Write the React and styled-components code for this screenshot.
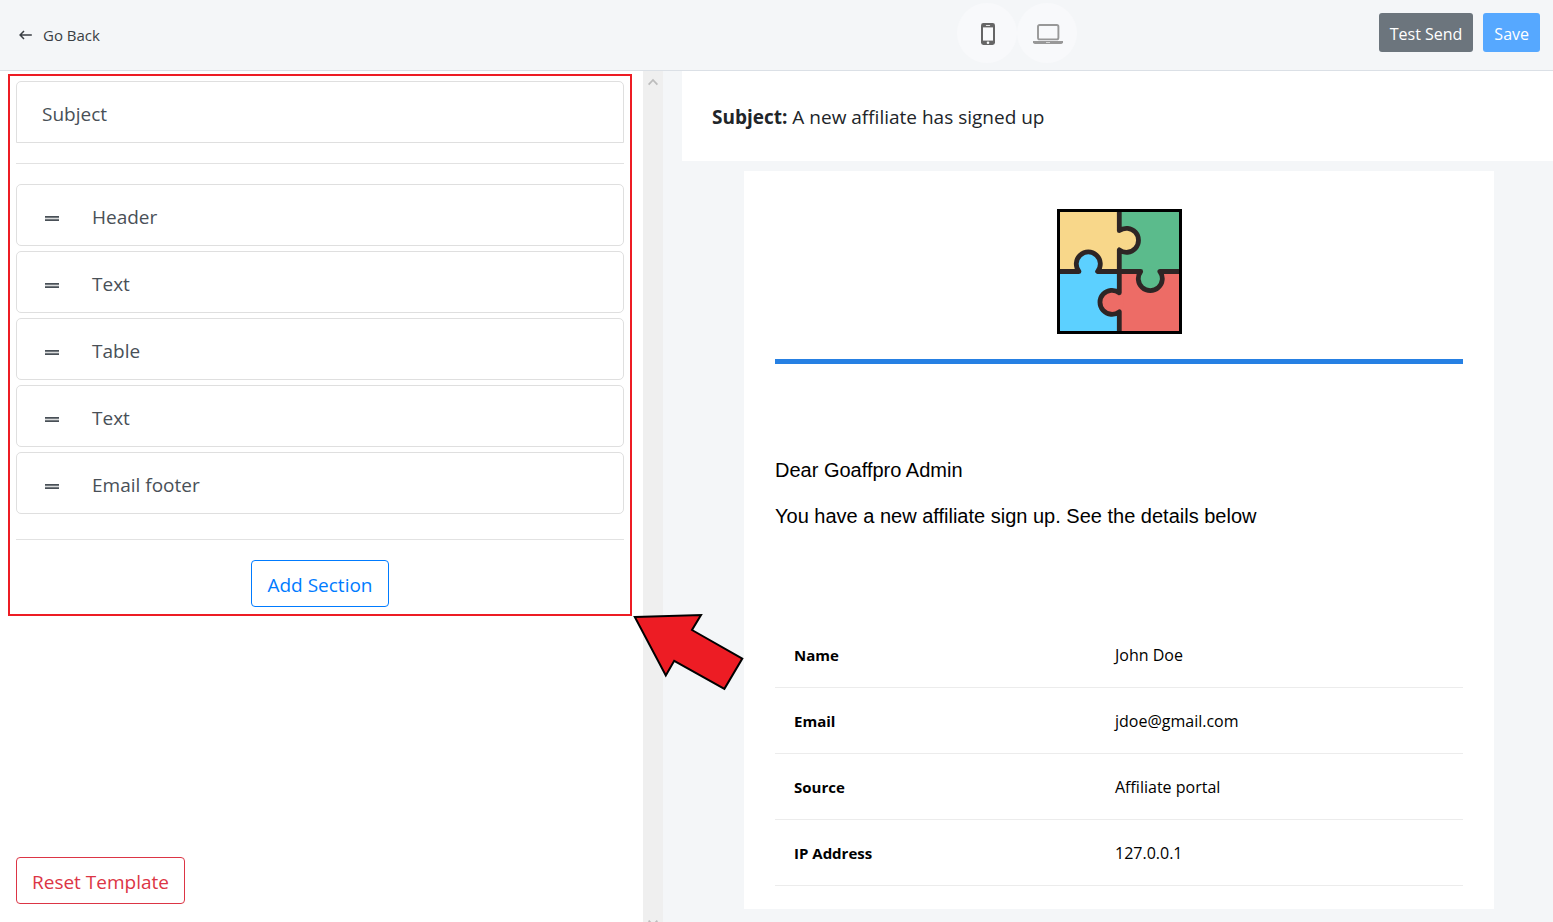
import React from "react";
import styled, { createGlobalStyle } from "styled-components";

const GlobalStyle = createGlobalStyle`
  *, *::before, *::after { box-sizing: border-box; }
  body {
    margin: 0;
    background: #ffffff;
    color: #212529;
    font-family: "Open Sans", "Noto Sans", sans-serif;
    font-size: 19px;
    line-height: 27px;
  }
  button { font-family: inherit; cursor: pointer; }
`;

const Page = styled.div`
  display: flex;
  flex-direction: column;
  min-height: 100vh;
`;

const TopBar = styled.header`
  display: grid;
  grid-template-columns: 957fr 120px 476fr;
  align-items: center;
  height: 71px;
  padding-bottom: 5px;
  background: #f4f6f8;
  border-bottom: 1px solid #dbe0e6;
`;

const BackLink = styled.a`
  display: inline-flex;
  align-items: center;
  justify-self: start;
  gap: 11px;
  padding: 4px 0 0 19px;
  color: #3a3f44;
  font-size: 15px;
  line-height: 22px;
  text-decoration: none;
`;

const DeviceSwitch = styled.div`
  display: flex;
`;

const DeviceButton = styled.button`
  display: flex;
  align-items: center;
  justify-content: center;
  width: 60px;
  height: 60px;
  padding: 2px 0 0 2px;
  border: 0;
  border-radius: 50%;
  background: #f8f9fb;
  color: ${(p) => (p.$active ? "#666666" : "#989898")};
`;

const Actions = styled.div`
  display: flex;
  justify-content: flex-end;
  gap: 10px;
  padding-right: 13px;
`;

const ActionButton = styled.button`
  height: 39px;
  padding: 2px 11px 0;
  border: 0;
  border-radius: 3px;
  background: ${(p) => (p.$primary ? "#56a8ff" : "#6c757d")};
  color: #ffffff;
  font-size: 16px;
  line-height: 24px;
`;

const Workspace = styled.div`
  flex: 1;
  display: grid;
  grid-template-columns: minmax(0, 643fr) 20px minmax(0, 890fr);
`;

const Sidebar = styled.aside`
  display: flex;
  flex-direction: column;
  justify-content: space-between;
  align-items: stretch;
  padding: 3px 11px 18px 8px;
`;

const SectionPanel = styled.section`
  position: relative;
  display: flex;
  flex-direction: column;
  padding: 5px 6px 7px;
  border: 2px solid #ed1c24;
`;

const SectionList = styled.ul`
  display: flex;
  flex-direction: column;
  gap: 5px;
  margin: 0 0 5px;
  padding: 0;
  list-style: none;
`;

const SectionRow = styled.button`
  display: flex;
  align-items: center;
  gap: 30px;
  width: 100%;
  height: 62px;
  padding: 5px 25px 0;
  border: 1px solid #dfdfdf;
  border-radius: ${(p) => (p.$flatBottom ? "5px 5px 0 0" : "5px")};
  background: #ffffff;
  color: #495057;
  font-size: 19px;
  line-height: 27px;
  text-align: left;
`;

const Divider = styled.hr`
  width: 100%;
  height: 1px;
  margin: 20px 0;
  border: 0;
  background: #e2e2e2;
`;

const OutlineButton = styled.button`
  align-self: ${(p) => p.$align};
  height: 47px;
  padding: 3px 15px 0;
  border: 1px solid currentColor;
  border-radius: 4px;
  background: #ffffff;
  color: ${(p) => p.$color};
  font-size: 19px;
  line-height: 27px;
`;

const ResetArea = styled.div`
  display: flex;
  padding: 20px 8px 0;
`;

const Pointer = styled.svg`
  position: absolute;
  left: calc(100% + 2px);
  top: calc(100% - 2px);
  z-index: 2;
`;

const ScrollTrack = styled.div`
  display: flex;
  flex-direction: column;
  justify-content: space-between;
  align-items: center;
  padding-top: 7px;
  background: #efefef;
`;

const Preview = styled.main`
  padding-left: 19px;
  background: #f4f6f8;
`;

const SubjectBar = styled.div`
  height: 90px;
  padding: 33px 30px;
  background: #ffffff;
  line-height: 27px;
`;

const EmailCard = styled.article`
  margin: 10px 59px 13px 62px;
  padding: 38px 31px 23px;
  background: #ffffff;
  color: #000000;
`;

const EmailHeader = styled.div`
  display: flex;
  justify-content: center;
  padding-bottom: 25px;
  border-bottom: 5px solid #2680e3;
`;

const EmailText = styled.div`
  padding: 93px 0 93px;
  font-family: "Liberation Sans", Arial, sans-serif;
  font-size: 20px;
  line-height: 26px;

  p { margin: 0; }
  p + p { margin-top: 20px; }
`;

const DetailTable = styled.table`
  width: 100%;
  table-layout: fixed;
  border-collapse: separate;
  border-spacing: 0;
  font-size: 16px;
  line-height: 25px;

  th, td {
    height: 66px;
    padding: 21px 19px 19px;
    border-bottom: 1px solid #ececec;
    text-align: left;
    vertical-align: middle;
  }
  th { width: 321px; font-size: 15px; font-weight: 700; }
`;

function BackArrow() {
  return (
    <svg width="13" height="10" viewBox="0 0 13 10" fill="none" stroke="#3a3f44" strokeWidth="1.5" aria-hidden="true">
      <path d="M12.8 5H1.2M5 1L1.1 5L5 9" />
    </svg>
  );
}

function PhoneIcon() {
  return (
    <svg width="14" height="22" viewBox="0 0 14 22" aria-hidden="true">
      <rect width="14" height="22" rx="2.4" fill="currentColor" />
      <rect x="2" y="4.4" width="10" height="13.2" fill="#fafbfc" />
      <rect x="4.8" y="1.9" width="4.4" height="1" rx="0.5" fill="#e6e6e6" />
      <circle cx="7" cy="19.8" r="1.3" fill="#fafbfc" />
    </svg>
  );
}

function LaptopIcon() {
  return (
    <svg width="30" height="20" viewBox="0 0 30 20" aria-hidden="true">
      <rect x="5" y="1" width="20.4" height="14.4" rx="1.6" fill="none" stroke="currentColor" strokeWidth="1.9" />
      <path d="M0 17H30V18.4Q29.4 20 27.6 20H2.4Q.6 20 0 18.4Z" fill="currentColor" />
      <rect x="13" y="18" width="4" height="0.9" fill="#dcdcdc" />
    </svg>
  );
}

function DragHandle() {
  return (
    <svg width="20" height="14" viewBox="0 0 20 14" fill="#495057" aria-hidden="true">
      <rect x="3" y="5" width="14" height="5" fillOpacity="0.2" />
      <rect x="3" y="5" width="14" height="1.7" />
      <rect x="3" y="8.3" width="14" height="1.7" />
    </svg>
  );
}

function PuzzleLogo() {
  return (
    <svg width="125" height="125" viewBox="0 0 125 125" role="img" aria-label="Puzzle logo">
      <rect width="62.5" height="62.5" fill="#f8d78a" />
      <rect x="62.3" width="62.7" height="62.5" fill="#5bbb8c" />
      <rect y="62.5" width="62.5" height="62.5" fill="#5cd0ff" />
      <rect x="62.3" y="62.5" width="62.7" height="62.5" fill="#ed6c66" />
      <circle cx="69.3" cy="31.3" r="12" fill="#f8d78a" />
      <circle cx="31.3" cy="55" r="12" fill="#5cd0ff" />
      <circle cx="93.3" cy="69.7" r="12" fill="#5bbb8c" />
      <circle cx="55" cy="93.3" r="12" fill="#ed6c66" />
      <g fill="none" stroke="#2e2525" strokeWidth="4.8" strokeLinejoin="round">
        <path d="M62.3 2V21.7A12 12 0 1 1 62.3 40.9V83.8A12 12 0 1 0 62.3 102.8V123" />
        <path d="M2 62.5H22A12 12 0 1 1 40.6 62.5H83.7A12 12 0 1 0 102.9 62.5H123" />
      </g>
      <rect x="1.5" y="1.5" width="122" height="122" fill="none" stroke="#000000" strokeWidth="3" />
    </svg>
  );
}

const sections = ["Header", "Text", "Table", "Text", "Email footer"];

const details = [
  ["Name", "John Doe"],
  ["Email", "jdoe@gmail.com"],
  ["Source", "Affiliate portal"],
  ["IP Address", "127.0.0.1"],
];

export default function App() {
  return (
    <Page>
      <GlobalStyle />
      <TopBar>
        <BackLink href="#back">
          <BackArrow />
          Go Back
        </BackLink>
        <DeviceSwitch>
          <DeviceButton type="button" $active aria-label="Mobile preview">
            <PhoneIcon />
          </DeviceButton>
          <DeviceButton type="button" aria-label="Desktop preview">
            <LaptopIcon />
          </DeviceButton>
        </DeviceSwitch>
        <Actions>
          <ActionButton type="button">Test Send</ActionButton>
          <ActionButton type="button" $primary>Save</ActionButton>
        </Actions>
      </TopBar>

      <Workspace>
        <Sidebar>
          <SectionPanel>
            <SectionRow type="button" $flatBottom>Subject</SectionRow>
            <Divider />
            <SectionList>
              {sections.map((name, i) => (
                <li key={i}>
                  <SectionRow type="button">
                    <DragHandle />
                    {name}
                  </SectionRow>
                </li>
              ))}
            </SectionList>
            <Divider />
            <OutlineButton type="button" $align="center" $color="#007bff">Add Section</OutlineButton>
            <Pointer width="114" height="82" viewBox="0 0 114 82" aria-hidden="true">
              <path
                d="M2.8 5L69 3L60 18L110.3 46.6L92.4 76.8L42.2 48.8L33.8 63.4Z"
                fill="#ed1c24"
                stroke="#000000"
                strokeWidth="2"
              />
            </Pointer>
          </SectionPanel>
          <ResetArea>
            <OutlineButton type="button" $align="flex-start" $color="#dc3545">Reset Template</OutlineButton>
          </ResetArea>
        </Sidebar>

        <ScrollTrack aria-hidden="true">
          <svg width="10" height="8" viewBox="0 0 10 8" fill="none" stroke="#bcbcbc" strokeWidth="1.8">
            <path d="M0.6 6.6L5 2L9.4 6.6" />
          </svg>
          <svg width="10" height="2" viewBox="0 0 10 2" fill="none" stroke="#bcbcbc" strokeWidth="1.8">
            <path d="M0.6 0.6L5 5.2L9.4 0.6" />
          </svg>
        </ScrollTrack>

        <Preview>
          <SubjectBar>
            <strong>Subject:</strong> A new affiliate has signed up
          </SubjectBar>
          <EmailCard>
            <EmailHeader>
              <PuzzleLogo />
            </EmailHeader>
            <EmailText>
              <p>Dear Goaffpro Admin</p>
              <p>You have a new affiliate sign up. See the details below</p>
            </EmailText>
            <DetailTable>
              <tbody>
                {details.map(([label, value]) => (
                  <tr key={label}>
                    <th scope="row">{label}</th>
                    <td>{value}</td>
                  </tr>
                ))}
              </tbody>
            </DetailTable>
          </EmailCard>
        </Preview>
      </Workspace>
    </Page>
  );
}
